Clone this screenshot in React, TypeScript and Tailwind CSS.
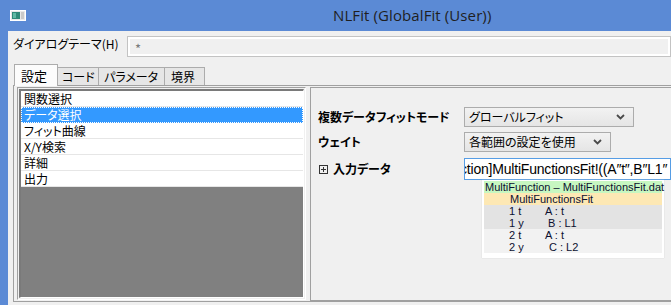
import React from 'react';

const ui = "[font-family:'Noto_Sans_CJK_JP','Noto_Sans',sans-serif] [font-feature-settings:'palt']";

function Chevron() {
  return (
    <svg width="9" height="6" viewBox="0 0 9 6" className="text-[#4a4a4a]">
      <path d="M1 1 L4.5 4.5 L8 1" fill="none" stroke="currentColor" strokeWidth="1.8" />
    </svg>
  );
}

function Combo({ label, width }: { label: string; width: string }) {
  return (
    <div
      className={`${width} shrink-0 h-[20px] flex items-center justify-between pl-[4px] pr-[8px] border border-[#acacac] bg-gradient-to-b from-[#f2f2f2] to-[#e5e5e5] text-[12px] leading-none text-black`}
    >
      <span>{label}</span>
      <Chevron />
    </div>
  );
}

const items = ['関数選択', 'データ選択', 'フィット曲線', 'X/Y検索', '詳細', '出力'];

const lookupRows = [
  { a: '1 t', b: 'A : t', pad: 'pl-[0px]', bg: 'bg-[#e3e3e3]' },
  { a: '1 y', b: 'B : L1', pad: 'pl-[3px]', bg: 'bg-[#e3e3e3]' },
  { a: '2 t', b: 'A : t', pad: 'pl-[0px]', bg: 'bg-[#f2f2f2]' },
  { a: '2 y', b: 'C : L2', pad: 'pl-[4px]', bg: 'bg-[#f2f2f2]' },
];

export default function App() {
  return (
    <div className={`w-[671px] h-[305px] overflow-hidden bg-[#5b8ad5] flex flex-col ${ui}`}>
      {/* title bar */}
      <div className="h-[31px] flex items-center shrink-0">
        <svg width="16" height="11" viewBox="0 0 16 11" className="ml-[10px] mt-[-1px]">
          <rect x="0.5" y="0.5" width="15" height="10" fill="#e8e8e8" stroke="#ffffff" />
          <rect x="2" y="2" width="8" height="7" fill="#2f8a78" />
          <rect x="3" y="3" width="3" height="5" fill="#5fb9a4" />
          <rect x="11" y="2" width="3" height="7" fill="#c9c9c9" />
        </svg>
        <span className="ml-[307px] text-[15px] leading-none text-[#1f1f1f] [font-family:'Open_Sans','Noto_Sans',sans-serif] tracking-[0.1px]">
          NLFit (GlobalFit (User))
        </span>
      </div>

      {/* body */}
      <div className="flex-1 ml-[8px] bg-[#f0f0f0] flex flex-col min-w-0">
        {/* dialog theme */}
        <div className="flex items-start pt-[5px] h-[26px]">
          <div className="w-[119px] shrink-0 pl-[5px] pt-[1px] text-[12px] leading-[14px] text-black">ダイアログテーマ(H)</div>
          <div className="flex-1 h-[21px] border border-[#c3c3c3] bg-[#f0f0f0] shadow-[inset_0_0_0_2px_#ffffff] flex items-center pl-[7px]">
            <span className="text-[13px] leading-none text-[#7a7a7a] mt-[3px]">*</span>
          </div>
        </div>

        {/* tabs */}
        <div className="flex items-end h-[21px] mt-[7px] ml-[6px] relative z-10">
          <div className="w-[44px] h-[22px] -mb-[1px] border border-b-0 border-[#acacac] bg-[#fcfcfc] text-[13px] leading-none text-black flex items-center pl-[6px] pb-[1px]">
            設定
          </div>
          <div className="w-[41px] h-[18px] border border-l-0 border-b-0 border-[#acacac] bg-[#e6e6e6] text-[12px] leading-none flex items-center pl-[4px]">
            コード
          </div>
          <div className="w-[66px] h-[18px] border border-l-0 border-b-0 border-[#acacac] bg-[#e6e6e6] text-[12px] leading-none flex items-center pl-[5px]">
            パラメータ
          </div>
          <div className="w-[40px] h-[18px] border border-l-0 border-b-0 border-[#acacac] bg-[#e6e6e6] text-[12px] leading-none flex items-center pl-[6px]">
            境界
          </div>
        </div>

        {/* tab page */}
        <div className="ml-[5px] h-[217px] border border-r-0 border-[#a0a0a0] bg-[#f0f0f0] flex items-start">
          {/* list */}
          <div className="shrink-0 ml-[3px] mt-[1px] w-[289px] h-[213px] border border-t-[#a0a0a0] border-l-[#a0a0a0] border-b-white border-r-white p-[1px]">
            <div className="h-full flex flex-col border-t-2 border-l-2 border-t-[#7a7a7a] border-l-[#7a7a7a] border-b border-r border-b-white border-r-white bg-[#808080]">
              {items.map((it, i) =>
                i === 1 ? (
                  <div
                    key={it}
                    className="h-[16px] bg-[#3399ff] text-white border border-dotted border-white text-[12px] leading-none flex items-center pl-[2px]"
                  >
                    {it}
                  </div>
                ) : (
                  <div
                    key={it}
                    className="h-[16px] bg-white border-b border-[#e6e6e6] text-[12px] leading-none text-black flex items-center pl-[3px]"
                  >
                    {it}
                  </div>
                )
              )}
            </div>
          </div>

          {/* settings pane */}
          <div className="ml-[4px] mt-[1px] flex-1 min-w-0 h-[214px] border border-r-0 border-[#a0a0a0] pl-[7px] pt-[19px] flex flex-col">
            <div className="flex items-center h-[20px]">
              <div className="w-[146px] shrink-0 text-[12px] font-bold leading-none text-black">複数データフィットモード</div>
              <Combo label="グローバルフィット" width="w-[170px]" />
            </div>
            <div className="flex items-center h-[20px] mt-[5px]">
              <div className="w-[146px] shrink-0 text-[12px] font-bold leading-none text-black">ウェイト</div>
              <Combo label="各範囲の設定を使用" width="w-[147px]" />
            </div>
            <div className="flex items-center h-[22px] mt-[6px]">
              <div className="w-[146px] shrink-0 flex items-center">
                <div className="w-[9px] h-[9px] ml-[1px] border border-[#333] flex items-center justify-center">
                  <svg width="7" height="7" viewBox="0 0 7 7">
                    <path d="M1 3.5 H6 M3.5 1 V6" stroke="#333" strokeWidth="1" />
                  </svg>
                </div>
                <span className="ml-[5px] text-[12px] font-bold leading-none text-black">入力データ</span>
              </div>
              <div className="relative flex-1 min-w-0 h-[22px] border border-[#569de5] bg-white">
                <div className="h-full overflow-hidden flex items-center">
                  <span className="whitespace-pre text-[14px] leading-none text-black ml-[-5px] tracking-[-0.2px] [font-family:'Liberation_Sans',sans-serif]">
                    ction]MultiFunctionsFit!((A″t″,B″L1″
                  </span>
                </div>
                {/* dropdown hint list */}
                <div className="absolute left-[17px] top-[21px] w-[182px] bg-white pl-[2px] pr-[2px] pt-[1px] pb-[5px] shadow-[0_0_1px_#c8c8c8] z-20 text-[11px] leading-[12px] text-[#0c1030] [font-family:'Liberation_Sans',sans-serif]">
                  <div className="h-[12px] bg-[#c7f7c1] pl-[1px] whitespace-pre">MultiFunction – MultiFunctionsFit.dat</div>
                  <div className="h-[12px] bg-[#fde8b4] pl-[26px]">MultiFunctionsFit</div>
                  {lookupRows.map((r) => (
                    <div key={r.a + r.b} className={`h-[12px] flex ${r.bg}`}>
                      <span className="w-[61px] pl-[25px] whitespace-pre">{r.a}</span>
                      <span className={`${r.pad} whitespace-pre`}>{r.b}</span>
                    </div>
                  ))}
                </div>
              </div>
            </div>
          </div>
        </div>
      </div>
    </div>
  );
}
